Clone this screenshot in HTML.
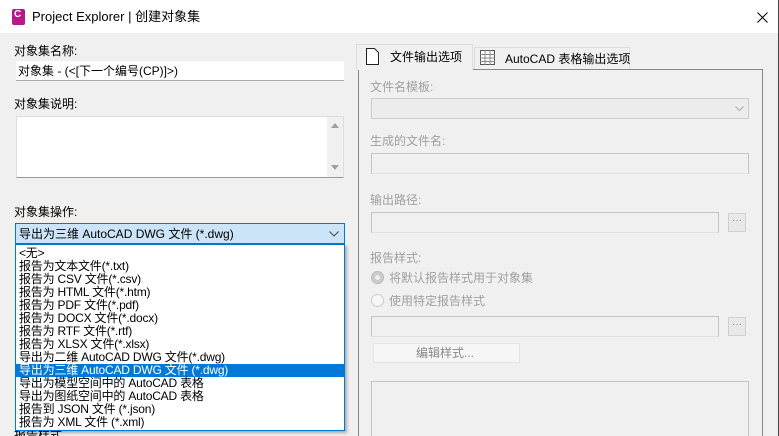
<!DOCTYPE html>
<html style="width:779px;height:436px;overflow:hidden"><head><meta charset="utf-8"><style>
*{box-sizing:border-box;margin:0;padding:0}
body{width:779px;height:436px;overflow:hidden;background:#f0f0f0;font-family:"Liberation Sans","Noto Sans CJK SC",sans-serif;font-size:12px;color:#000;position:relative}
.a{position:absolute}
.t{white-space:nowrap;line-height:14px}
.dis{color:#a0a0a0}
.box{background:#f0f0f0;border:1px solid #c4c4c4;border-bottom-color:#e0e0e0}
.btn{background:#e8e8e8;border:1px solid #d0d0d0;font-size:10px;color:#777;text-align:center;line-height:14px}
.li{height:13px;line-height:13px;font-size:12px;padding-left:3px;white-space:nowrap;letter-spacing:-0.2px}
</style></head><body>
<div class="a" style="left:0;top:0;width:779px;height:33px;background:#fff"></div>
<div class="a" style="right:0;top:0;width:1px;height:436px;background:#444"></div>
<div class="a" style="left:12px;top:9px;width:13px;height:16px;background:#b5198c;border-radius:2px"></div>
<div class="a t" style="left:14px;top:8px;color:#fff;font-weight:bold;font-size:10px">C</div>
<div class="a t" style="left:32px;top:10px;font-size:13px">Project Explorer | 创建对象集</div>
<svg class="a" style="left:757px;top:12px" width="11" height="11"><path d="M0.5 0.5L10.5 10.5M10.5 0.5L0.5 10.5" stroke="#000" stroke-width="1"/></svg>

<div class="a t" style="left:14px;top:44px">对象集名称:</div>
<div class="a" style="left:16px;top:61px;width:328px;height:20px;background:#fff;border-bottom:1px solid #aaa"></div>
<div class="a t" style="left:18px;top:64px">对象集 - (&lt;[下一个编号(CP)]&gt;)</div>
<div class="a t" style="left:14px;top:97px">对象集说明:</div>
<div class="a" style="left:16px;top:116px;width:328px;height:62px;background:#fff;border:1px solid #ddd;border-bottom-color:#999"></div>
<div class="a" style="left:327px;top:117px;width:16px;height:60px;background:#f0f0f0"></div>
<div class="a" style="left:331px;top:123px;border:4px solid transparent;border-bottom:5px solid #a0a0a0;border-top:0"></div>
<div class="a" style="left:331px;top:165px;border:4px solid transparent;border-top:5px solid #a0a0a0;border-bottom:0"></div>
<div class="a t" style="left:14px;top:205px">对象集操作:</div>
<div class="a" style="left:15px;top:223px;width:330px;height:21px;background:#cce4f7;border:1px solid #0078d7"></div>
<div class="a t" style="left:19px;top:227px">导出为三维 AutoCAD DWG 文件 (*.dwg)</div>
<svg class="a" style="left:329px;top:231px" width="10" height="6"><path d="M0.5 0.5L5 5L9.5 0.5" fill="none" stroke="#444"/></svg>
<div class="a t" style="left:14px;top:428px;height:8px;overflow:hidden">报告样式</div>
<div class="a" style="left:15px;top:244px;width:330px;height:187px;background:#fff;border:1px solid #0078d7;box-shadow:2px 2px 3px rgba(0,0,0,.3);padding-top:2px;overflow:hidden">
<div class="li">&lt;无&gt;</div>
<div class="li">报告为文本文件(*.txt)</div>
<div class="li">报告为 CSV 文件(*.csv)</div>
<div class="li">报告为 HTML 文件(*.htm)</div>
<div class="li">报告为 PDF 文件(*.pdf)</div>
<div class="li">报告为 DOCX 文件(*.docx)</div>
<div class="li">报告为 RTF 文件(*.rtf)</div>
<div class="li">报告为 XLSX 文件(*.xlsx)</div>
<div class="li">导出为二维 AutoCAD DWG 文件(*.dwg)</div>
<div class="li" style="background:#0078d7;color:#fff">导出为三维 AutoCAD DWG 文件 (*.dwg)</div>
<div class="li">导出为模型空间中的 AutoCAD 表格</div>
<div class="li">导出为图纸空间中的 AutoCAD 表格</div>
<div class="li">报告到 JSON 文件 (*.json)</div>
<div class="li">报告为 XML 文件 (*.xml)</div>
</div>

<div class="a" style="left:358px;top:69px;width:405px;height:367px;border:1px solid #888;border-bottom:none;background:#f0f0f0"></div>
<div class="a" style="left:356px;top:44px;width:117px;height:26px;background:#f0f0f0;border:1px solid #ddd;border-bottom:none"></div>
<svg class="a" style="left:366px;top:48px" width="13" height="17"><path d="M0.5 0.5H8.5L12.5 4.5V16.5H0.5Z" fill="#fff" stroke="#222"/></svg>
<div class="a t" style="left:390px;top:50px">文件输出选项</div>
<div class="a" style="left:474px;top:47px;width:156px;height:22px;background:#f0f0f0;border:1px solid #ddd;border-bottom:none"></div>
<svg class="a" style="left:480px;top:50px" width="15" height="15"><rect x="0.5" y="0.5" width="14" height="14" fill="#fff" stroke="#555"/><path d="M0 4.5H15M0 8H15M0 11.5H15M5 0V15M10 0V15" stroke="#888"/></svg>
<div class="a t" style="left:505px;top:52px">AutoCAD 表格输出选项</div>

<div class="a t dis" style="left:370px;top:80px">文件名模板:</div>
<div class="a" style="left:371px;top:98px;width:378px;height:21px;background:#ececec;border:1px solid #ccc"></div>
<svg class="a" style="left:735px;top:106px" width="9" height="5"><path d="M0.5 0.5L4.5 4.5L8.5 0.5" fill="none" stroke="#aaa"/></svg>
<div class="a t dis" style="left:370px;top:134px">生成的文件名:</div>
<div class="a box" style="left:371px;top:153px;width:378px;height:21px"></div>
<div class="a t dis" style="left:370px;top:193px">输出路径:</div>
<div class="a box" style="left:371px;top:212px;width:348px;height:21px"></div>
<div class="a btn" style="left:728px;top:213px;width:18px;height:19px">···</div>
<div class="a t dis" style="left:370px;top:251px">报告样式:</div>
<div class="a" style="left:371px;top:271px;width:13px;height:13px;border-radius:50%;background:#ccc;border:1px solid #bbb"></div>
<div class="a" style="left:375px;top:275px;width:5px;height:5px;border-radius:50%;background:#eee"></div>
<div class="a t dis" style="left:389px;top:271px">将默认报告样式用于对象集</div>
<div class="a" style="left:371px;top:294px;width:13px;height:13px;border-radius:50%;background:#f6f6f6;border:1px solid #ccc"></div>
<div class="a t dis" style="left:389px;top:294px">使用特定报告样式</div>
<div class="a box" style="left:371px;top:316px;width:348px;height:21px"></div>
<div class="a btn" style="left:728px;top:317px;width:18px;height:19px">···</div>
<div class="a" style="left:373px;top:343px;width:147px;height:20px;background:#f6f6f6;border:1px solid #e4e4e4"></div>
<div class="a t dis" style="left:416px;top:346px;color:#888">编辑样式...</div>
<div class="a" style="left:371px;top:381px;width:378px;height:55px;border:1px solid #c4c4c4;border-bottom:none"></div>
</body></html>
